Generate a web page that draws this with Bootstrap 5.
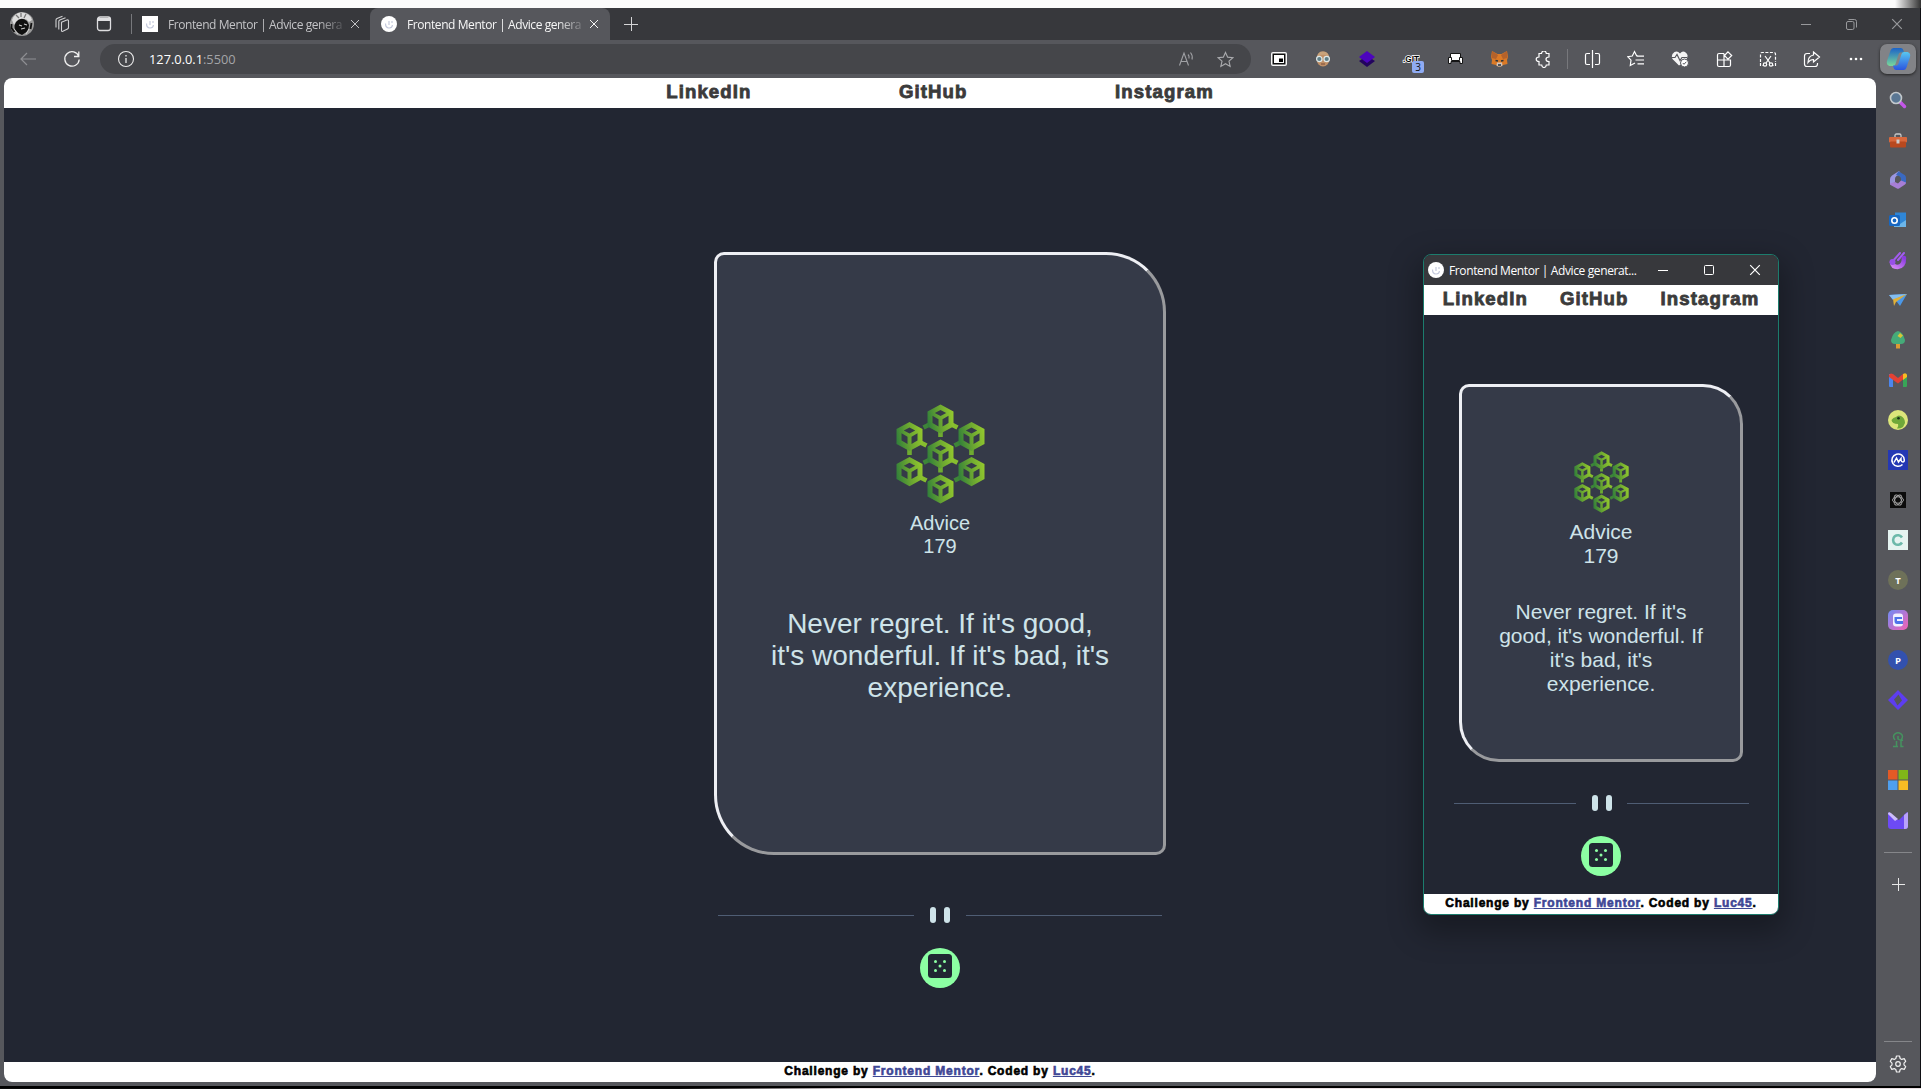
<!DOCTYPE html>
<html lang="en">
<head>
<meta charset="utf-8">
<title>Frontend Mentor | Advice generator app</title>
<link href="https://cdn.jsdelivr.net/npm/bootstrap@5.3.0/dist/css/bootstrap.min.css" rel="stylesheet">
<style>
body{width:1921px;height:1089px;overflow:hidden;background:#56575c;font-family:"Liberation Sans",Arial,sans-serif;line-height:normal}
svg{display:block;flex:none}
.ui-font{font-family:"Open Sans","Noto Sans",sans-serif}
.desk-top{height:8px;background:linear-gradient(90deg,transparent 1895px,#333 1921px),#fbfbfb}
.desk-bottom{height:3px;background:linear-gradient(#000 2px,transparent 2px),linear-gradient(90deg,#0a0a0a 680px,#e8dfe2 860px)}
.frame-edge{border-right:1px solid #0f1014}
.tab-strip{height:32px;background:#37383c}
.tab-item{height:32px;font-size:12px;color:#c3c3c6}
.tab-item.on{background:#56575c;border-radius:8px 8px 0 0;color:#f6f6f6}
.tab-title{width:174px;white-space:nowrap;letter-spacing:-.42px;-webkit-mask-image:linear-gradient(90deg,#000 150px,rgba(0,0,0,.15) 176px)}
.fav{width:16px;height:16px;background:#fff}
.vline{width:1px;height:20px;background:#77787c}
.tool-row{height:38px}
.address{width:1151px;height:30px;border-radius:15px;background:#45464a;font-size:12.8px;color:#a4a5a8}
.address b{font-weight:400;color:#fff}
.cell{width:44px;height:30px;display:flex;align-items:center;justify-content:center;flex:none}
.win-cell{width:45.5px;display:flex;justify-content:center}
.copilot{width:36px;height:30px;border-radius:7px;background:#828387;box-shadow:0 1px 3px #222}
.ext-count{left:23px;top:17px;width:12px;height:12px;border-radius:2px;background:#8fabf3;color:#111;font-size:10px;line-height:12px;text-align:center}
.page-view{width:1872px;height:1004px;border-radius:8px;overflow:hidden;background:#222632}
.top-links{height:30px;background:#fff;color:#3b3b3b;font-weight:700;font-size:18.6px;letter-spacing:1.1px;line-height:28px;-webkit-text-stroke:.85px #3b3b3b}
.wide-gap{gap:147.5px}.slim-gap{gap:32px}
.credits{height:20px;background:#fff;color:#000;font-size:12px;font-weight:700;letter-spacing:.8px;-webkit-text-stroke:.6px;line-height:18px}
.credits a{color:#3e4795;text-decoration:underline}
.advice-box{background:#353a48;border:3px solid;border-color:#eeeff4 #999a9d #999a9d #eeeff4;color:#cee3e9;text-align:center}
.box-lg{width:452px;height:603px;border-radius:10px 60px 10px 60px;margin-top:144px;padding-top:149px}
.box-sm{width:284px;height:378px;border-radius:10px 40px 10px 40px;margin-top:69px;padding-top:64px}
.num-lg{font-size:20px;line-height:23px;margin-top:8px}
.num-sm{font-size:21px;line-height:24px;margin-top:7px}
.say-lg{font-size:28px;line-height:32px;margin-top:50px;width:345px}
.say-sm{font-size:21px;line-height:24px;margin-top:32px;width:210px}
.dice-btn{width:40px;height:40px;border-radius:50%;background:#8cffa3}
.side-rail{width:44px}
.side-rail .slot{height:40px;display:flex;align-items:center;justify-content:center}
.side-rail .rule{width:28px;height:1px;background:#85868a}
.pop{left:1423px;top:254px;width:356px;height:661px;border:1px solid #1c7c6d;border-radius:8px;overflow:hidden;background:#222632}
.pop-shadow{left:1423px;top:254px;width:356px;height:661px;border-radius:8px;box-shadow:0 12px 30px 6px rgba(0,0,0,.3)}
.pop-bar{height:30px;background:#37383c;color:#fff;font-size:12px}
.pop-bar .ttl{width:192px;white-space:nowrap;letter-spacing:-.38px}
</style>
<script src="https://cdn.jsdelivr.net/npm/bootstrap@5.3.0/dist/js/bootstrap.bundle.min.js"></script>
</head>
<body>
<svg width="0" height="0" class="position-absolute">
<defs>
<linearGradient id="leaf" x1="0" y1=".6" x2="1" y2=".4"><stop offset="0" stop-color="#32803a"/><stop offset=".5" stop-color="#69a531"/><stop offset="1" stop-color="#93c82e"/></linearGradient>
<linearGradient id="cp1" x1="0" y1="0" x2="0" y2="1"><stop offset="0" stop-color="#1b62c8"/><stop offset="1" stop-color="#7ad99a"/></linearGradient>
<linearGradient id="cp2" x1="0" y1="0" x2="0" y2="1"><stop offset="0" stop-color="#58c7f0"/><stop offset="1" stop-color="#2b55e0"/></linearGradient>
<linearGradient id="pk" x1="0" y1="0" x2="1" y2="1"><stop offset="0" stop-color="#6f8df5"/><stop offset="1" stop-color="#f55fb3"/></linearGradient>
<linearGradient id="pur" x1="0" y1="1" x2="1" y2="0"><stop offset="0" stop-color="#d487f5"/><stop offset="1" stop-color="#8a3be0"/></linearGradient>
<symbol id="cube" viewBox="-14 -15 28 30" overflow="visible"><path fill="url(#leaf)" fill-rule="evenodd" d="M0-14.6 13-7.6V7.4L0 14.6-13 7.4V-7.6ZM0-9 5.7-6 0-3-5.7-6ZM-8-3.2-2 .2V7.4L-8 4ZM8-3.2 2 .2V7.4L8 4Z"/></symbol>
<symbol id="blocks" viewBox="-44.5 -50 89 100">
<g stroke-width="4.6" fill="none">
<path stroke="#6fab31" d="M0-22V-17M0 13v5.5M-31-5V1M31-5V1"/>
<path stroke="#86bd2f" d="M11-29.5 17-26.5M11 5.700 17 8.700M-20-11.500-14-8.500M-20 23.500-14 26.500"/>
<path stroke="#3e8538" d="M-11-29.500-17-26.500M-11 5.700-17 8.700M20-11.500 14-8.500M20 23.500 14 26.500"/>
</g>
<use href="#cube" x="-14" y="-50" width="28" height="30"/><use href="#cube" x="-14" y="-15" width="28" height="30"/><use href="#cube" x="-14" y="20" width="28" height="30"/>
<use href="#cube" x="-45" y="-32.500" width="28" height="30"/><use href="#cube" x="-45" y="2.700" width="28" height="30"/>
<use href="#cube" x="17" y="-32.500" width="28" height="30"/><use href="#cube" x="17" y="2.700" width="28" height="30"/>
</symbol>
<symbol id="dice" viewBox="0 0 24 24"><rect width="24" height="24" rx="3.500" fill="#202733"/><g fill="#8cffa3"><circle cx="7.500" cy="7.500" r="1.500"/><circle cx="16.500" cy="7.500" r="1.500"/><circle cx="12" cy="12" r="1.500"/><circle cx="7.500" cy="16.500" r="1.500"/><circle cx="16.500" cy="16.500" r="1.500"/></g></symbol>
<symbol id="spark" viewBox="0 0 16 16"><path d="M4.500 7.500c0 6 6.500 5.500 7 1.500M8 5v4M11 5v2" fill="none" stroke="#c5cadd" stroke-width="1.200"/></symbol>
<symbol id="cross" viewBox="0 0 10 10"><path d="M1 1 9 9M9 1 1 9" fill="none" stroke="currentColor"/></symbol>
</defs>
</svg>

<div class="desk-top"></div>
<div class="frame-edge">
  <!-- tab strip -->
  <div class="tab-strip d-flex align-items-center ui-font text-light">
    <svg style="margin-left:9px" width="26" height="26" viewBox="0 0 26 26"><circle cx="13" cy="13" r="12" fill="#999"/><path d="M3 9Q6 1 13 1.500 21 2 23 9L20 11Q17 7 13 8 8 8 5 14Z" fill="#dcdcdc"/><path d="M7 4l3 3M17 3l-2 4M12 2v4" stroke="#777" stroke-width="1.300"/><path d="M7 11q5-6 11-1l2 4-1 6-6 4-6-3q-3-5 0-10" fill="#101010"/><path d="M10 14l3 1M15 13l3 1M12 18l4-1M5 18l4 5M20 18l-3 5" stroke="#ccc" stroke-width="1.200" fill="none"/><path d="M2.500 13v4l3 4M22.500 12l-1 6" stroke="#111" stroke-width="1.800" fill="none"/></svg>
    <svg style="margin-left:18px" width="18" height="18" viewBox="0 0 18 18" fill="none" stroke="#d0d0d2" stroke-width="1.100"><path d="M8.500 7.200 13.800 5q1.700-.5 1.700 1v6.500q0 1-1 1.500L9.800 16.300Q8.500 16.800 8.500 15.500ZM5.800 14.500V6.500q0-1 1-1.500L12.500 2.800M3 12.500V5q0-1 1-1.500L9.500 1.300"/></svg>
    <svg style="margin-left:24px" width="18" height="18" viewBox="0 0 18 18" fill="none" stroke="#dedee0" stroke-width="1.300"><rect x="2.500" y="2" width="13" height="13.500" rx="2.500"/><path d="M3 4.500h12" stroke-width="3"/></svg>
    <div class="vline" style="margin-left:18px"></div>
    <div class="tab-item d-flex align-items-center" style="padding-left:10px;width:238px">
      <div class="fav"><svg width="16" height="16"><use href="#spark"/></svg></div><div class="tab-title" style="margin-left:10px">Frontend Mentor | Advice genera</div>
      <svg style="margin-left:8px" width="10" height="10"><use href="#cross"/></svg>
    </div>
    <div class="tab-item on d-flex align-items-center" style="padding-left:11px;width:240px">
      <div class="fav rounded-circle"><svg width="16" height="16"><use href="#spark"/></svg></div><div class="tab-title" style="margin-left:10px">Frontend Mentor | Advice genera</div>
      <svg style="margin-left:8px" width="10" height="10"><use href="#cross"/></svg>
    </div>
    <svg style="margin-left:14px" width="14" height="14" viewBox="0 0 14 14" stroke="#d5d5d7"><path d="M0 7.500h14M7.500 0v14"/></svg>
    <div class="d-flex align-items-center ms-auto" style="color:#98999c">
      <div class="win-cell"><svg width="10" height="10" stroke="currentColor"><path d="M0 5.500h10"/></svg></div>
      <div class="win-cell"><svg width="11" height="11" viewBox="0 0 11 11" stroke="currentColor" fill="none"><rect x=".5" y="2.500" width="7.500" height="8" rx="1.500"/><path d="M2.500.5h6q2 0 2 2v6"/></svg></div>
      <div class="win-cell"><svg width="12" height="12"><use href="#cross"/></svg></div>
    </div>
  </div>
  <!-- toolbar -->
  <div class="tool-row d-flex align-items-center ui-font">
    <svg style="margin-left:19px" width="18" height="14" viewBox="0 0 18 14" fill="none" stroke="#8e8f93" stroke-width="1.200"><path d="M17 7H2M8 1 2 7l6 6"/></svg>
    <svg style="margin-left:26px" width="18" height="18" viewBox="0 0 18 18" fill="none" stroke="#f0f0f0" stroke-width="1.300"><path d="M15.800 6.500A7.200 7.200 0 1 0 16.200 9.500M15.800 1.500V6.500H11"/></svg>
    <div class="address d-flex align-items-center" style="margin-left:19px">
      <svg style="margin-left:17px" width="18" height="18" viewBox="0 0 18 18" fill="none" stroke="#eaeaea" stroke-width="1.100"><circle cx="9" cy="9" r="7.500"/><path d="M9 8v5M9 5v1.500" stroke-width="1.300"/></svg>
      <div style="margin-left:14px;letter-spacing:0"><b>127.0.0.1</b>:5500</div>
      <svg class="ms-auto" width="18" height="16" viewBox="0 0 18 16" fill="none" stroke="#a0a1a5" stroke-width="1.100"><path d="M3.500 14.500 8 2l4.500 12.500M5 10.500h6M12 3.500q1.500 1.500 1 4M14.500 1.500q2.500 3 1.500 7"/></svg>
      <svg style="margin:0 17px 0 23px" width="17" height="17" viewBox="0 0 18 18" fill="none" stroke="#a9aaad" stroke-width="1.200"><path d="M9 1.500 11.300 6.500 16.800 7.100 12.700 10.800 13.900 16.300 9 13.500 4.100 16.300 5.300 10.800 1.200 7.100 6.700 6.500Z"/></svg>
    </div>
    <div class="d-flex align-items-center" style="margin-left:6px;color:#f3f3f3">
      <div class="cell"><svg width="16" height="14"><rect width="16" height="14" rx="2" fill="#f6f6f6"/><rect x="1.500" y="1.500" width="13" height="11" fill="#101010"/><rect x="3" y="3" width="10" height="8" fill="#fff"/><rect x="8" y="6.500" width="4" height="3.500" fill="#000"/></svg></div>
      <div class="cell"><svg width="16" height="16" viewBox="0 0 16 16"><ellipse cx="8" cy="8" rx="6.500" ry="7.500" fill="#c09067"/><path d="M2 6Q3 0 8 .5q5 0 6 5Q8 2 2 6" fill="#c9a37b"/><g fill="#5f7f88" stroke="#dfe8e8" stroke-width="1.200"><circle cx="4.300" cy="8" r="2.700"/><circle cx="11.700" cy="8" r="2.700"/></g><path d="M6 13h4" stroke="#784a36"/></svg></div>
      <div class="cell"><svg width="18" height="16" viewBox="0 0 18 16"><path d="M1 10 9 5l8 5-8 6Z" fill="#23045e"/><path d="M1 6 9 0l8 6-8 6Z" fill="#4c04bd"/></svg></div>
      <div class="cell position-relative"><svg width="18" height="14" viewBox="0 0 18 14"><text x="1" y="10" font-family="Liberation Sans" font-size="9" font-weight="700" fill="#000" stroke="#fff" stroke-width="1.600" paint-order="stroke" textLength="16" lengthAdjust="spacingAndGlyphs">.GIT</text></svg><span class="position-absolute ext-count">3</span></div>
      <div class="cell"><svg width="15" height="12" viewBox="0 0 15 12" fill="#fff" stroke="#151515"><path d="M2.500.5h10v8h-10Z"/><path d="M.5 4.500h3v3h8v-3h3V10.500h-2.500V8.500h-9v2H.5Z"/></svg></div>
      <div class="cell"><svg width="17" height="16" viewBox="0 0 17 16"><path d="M1 0 6.500 3h4L16 0l1 6-1 3 .500 4-4.500 1-2 1.500H7L5 14 .5 13 1 9 0 6Z" fill="#db7a26"/><path d="M1 0 7 4 5 8 .5 7ZM16 0 10 4l2 4 4.500-1Z" fill="#b4622b"/><path d="M6 11.500h5l.5 3-1.500 1H7L5.500 14.500Z" fill="#cfc3ba"/><path d="M4.500 9.500 7 10M12.500 9.500 10 10M7 14h3" stroke="#28323c" stroke-width="1.300"/></svg></div>
      <div class="cell"><svg width="17" height="17" viewBox="0 0 17 17" fill="none" stroke="#fff" stroke-width="1.200"><path d="M4 2.500H6.500Q7-.2 9-.1 11 0 11.300 2.500H14V6Q11 6 11 8.200 11 10.500 14 10.500V14H11.300Q11 16.500 9 16.500T6.700 14H4V10.500Q1.200 10.300 1.200 8.200T4 6Z"/></svg></div>
      <div class="vline" style="margin:0 2px"></div>
      <div class="cell"><svg width="17" height="18" viewBox="0 0 17 18" fill="none" stroke="#fff" stroke-width="1.200"><path d="M6 3.500H3Q1.500 3.500 1.500 5v8q0 1.500 1.500 1.500h3M8.500 0v18M11 3.500H14q1.500 0 1.500 1.500v8q0 1.500-1.500 1.500h-3"/></svg></div>
      <div class="cell"><svg width="18" height="18" viewBox="0 0 18 18" fill="none" stroke="#fff" stroke-width="1.200"><path d="M11 6 9.500 5.500 7.500 1.500 5.300 6 .8 6.700 4 10.200 3.300 15.500 8 13M9.500 6.200H17M8.500 10H17M10.500 13.800H17"/></svg></div>
      <div class="cell"><svg width="18" height="18" viewBox="0 0 18 18"><path d="M9 3.500Q6.500.5 3.500 2-.5 4.500 1.500 9L8 15.500 12 13q5-4 4.500-8Q15 1.500 12 1.500 10 1.800 9 3.500" fill="#f4f4f4"/><path d="M0 7.500h4l2-3 3 6 2-3h5" fill="none" stroke="#56575c" stroke-width="1.200"/><circle cx="13.500" cy="13" r="4" fill="#fff" stroke="#56575c"/><path d="m11.800 13 1.200 1.300 2.300-2.500" stroke="#56575c" fill="none"/></svg></div>
      <div class="cell"><svg width="17" height="17" viewBox="0 0 17 17" fill="none" stroke="#fff" stroke-width="1.200"><path d="M8 2.500H3Q1.500 2.500 1.500 4v10q0 1.500 1.500 1.500H13q1.500 0 1.500-1.500V9H1.500M8 2.500v13M12 .8 15.700 4.500 12 8.200 8.400 4.500Z"/></svg></div>
      <div class="cell"><svg width="18" height="17" viewBox="0 0 18 17" fill="none" stroke="#fff" stroke-width="1.200"><path d="M1.500 11V3q0-1.500 1.500-1.500h12q1.500 0 1.500 1.500v8M1.500 12v2.500h3M16.500 12v2.500h-3" stroke-dasharray="3 1.500"/><path d="M6 5l5 7M12 5 7 12"/><circle cx="6" cy="13.500" r="1.700"/><circle cx="12" cy="13.500" r="1.700"/></svg></div>
      <div class="cell"><svg width="18" height="17" viewBox="0 0 18 17" fill="none" stroke="#fff" stroke-width="1.200"><path d="M7 2.500H4Q1.500 2.500 1.500 5v8q0 2.500 2.500 2.500h8q2.500 0 2.500-2.500v-1M10.500 1 16.500 6l-6 5V8.500Q7 8.500 5 11.500 5 5 10.500 4Z"/></svg></div>
      <div class="cell"><svg width="14" height="4" fill="#fff"><circle cx="2" cy="2" r="1.300"/><circle cx="7" cy="2" r="1.300"/><circle cx="12" cy="2" r="1.300"/></svg></div>
    </div>
    <div class="copilot d-flex align-items-center justify-content-center" style="margin-left:2px"><svg width="25" height="24" viewBox="0 0 25 24"><path d="M7.500 1H15q2 .2 2.500 2.500L18 5.500h-3.500q-1.500 0-2 2L9.500 17q-.7 2-2.500 2H3.500Q0 18 1 14L4.500 3.500Q5.300 1 7.500 1" fill="url(#cp1)"/><path d="M17.500 23H10q-2-.2-2.500-2.500L7 18.500h3.500q1.500 0 2-2L15.500 7q.7-2 2.500-2h3.500Q25 6 24 10l-3.500 10.500Q19.700 23 17.500 23" fill="url(#cp2)"/></svg></div>
  </div>
  <div class="d-flex" style="height:1008px">
    <!-- web page -->
    <div class="page-view d-flex flex-column" style="margin-left:4px">
      <nav class="top-links wide-gap d-flex justify-content-center"><span>LinkedIn</span><span>GitHub</span><span>Instagram</span></nav>
      <main class="flex-fill d-flex flex-column align-items-center">
        <div class="advice-box box-lg d-flex flex-column align-items-center">
          <svg width="89" height="100"><use href="#blocks"/></svg>
          <div class="num-lg">Advice<br>179</div>
          <div class="say-lg">Never regret. If it's good, it's wonderful. If it's bad, it's experience.</div>
        </div>
        <svg style="margin-top:52px" width="444" height="16"><path fill="#4f5d74" d="M0 8h196v1H0zM248 8h196v1H248z"/><g fill="#cee3e9"><rect x="212" width="6" height="16" rx="3"/><rect x="226" width="6" height="16" rx="3"/></g></svg>
        <div class="dice-btn d-flex justify-content-center" style="margin-top:25px;padding-top:6px"><svg width="24" height="24"><use href="#dice"/></svg></div>
      </main>
      <footer class="credits text-center">Challenge by <a href="#">Frontend Mentor</a>. Coded by <a href="#">Luc45</a>.</footer>
    </div>
    <!-- sidebar -->
    <aside class="side-rail d-flex flex-column align-items-stretch">
      <div style="height:2px"></div>
      <div class="slot"><svg width="18" height="18" viewBox="0 0 18 18"><path d="m11 11 4.500 4.500" stroke="#c356e8" stroke-width="3.500" stroke-linecap="round"/><circle cx="7" cy="7" r="5.500" fill="#5a7794" stroke="#c2c8cc" stroke-width="1.600"/></svg></div>
      <div class="slot"><svg width="18" height="15" viewBox="0 0 18 15"><path d="M6 4V2.500Q6 1 7.500 1h3Q12 1 12 2.500V4" fill="none" stroke="#c9c9c9" stroke-width="1.300"/><rect x="0" y="4" width="18" height="5.500" rx="1" fill="#d9683c"/><rect x="1" y="8.500" width="16" height="6" rx="1" fill="#b8491f"/><rect x="7.500" y="6.500" width="3" height="4" fill="#ccc"/></svg></div>
      <div class="slot"><svg width="18" height="18" viewBox="0 0 18 18"><path d="M10 0 3 4.500Q1 6 1 8v4.500q0 1 1 1.500l4-3V8q0-2 1.500-3L12 3Z" fill="#9b96e0"/><path d="m9.500.3 6.500 4q1 1 1 3v5.200l-5-2V8Q12 6 10 5L7 4Z" fill="#3a69c0"/><path d="M1 12.500Q1 13.500 2 14.200l6 3.300q1 .500 2 0l6-4q1-.7 1-2l-5-2-3 3-3-1.500Z" fill="#a77ed6"/></svg></div>
      <div class="slot"><svg width="18" height="18" viewBox="0 0 18 18"><path d="M6 1.500h11V15H6Z" fill="#2f86d6"/><path d="m5 10 6 3 6-4v7H5Z" fill="#6cb6ea"/><rect y="4" width="11" height="11" rx="1.500" fill="#1767c2"/><circle cx="5.500" cy="9.500" r="2.700" fill="none" stroke="#fff" stroke-width="1.600"/></svg></div>
      <div class="slot"><svg width="18" height="19" viewBox="0 0 18 19"><path d="M3 11Q3.500 16 8.500 16 15 15.500 15 7" fill="none" stroke="url(#pur)" stroke-width="4.500" stroke-linecap="round"/><path d="M3 11 11 2M9 9l6-7" stroke="#a25cf0" stroke-width="2" stroke-linecap="round"/><circle cx="3.500" cy="11" r="3" fill="#9850e8"/></svg></div>
      <div class="slot"><svg width="18" height="13" viewBox="0 0 18 13"><path d="M0 1 18 0 11 12 8 8Z" fill="#4b98e8"/><path d="m0 1 4 5L18 0Z" fill="#83bdf0"/><path d="m4 5 1 7 2-4L18 0 5 5Z" fill="#e0b038"/></svg></div>
      <div class="slot"><svg width="14" height="18" viewBox="0 0 14 18"><path d="M5 11h4v6.500H5Z" fill="#dc9b33"/><path d="M7 0Q12 1 14 9q0 4-4 4H4q-4 0-4-4Q2 1 7 0" fill="#45ab79"/><path d="M9 2 12 4.500 9.500 7 6.500 5Z" fill="#d7c638"/></svg></div>
      <div class="slot"><svg width="18" height="14" viewBox="0 0 18 14"><path d="M0 1h4v13H1q-1 0-1-1Z" fill="#4c86ed"/><path d="M14 1h4v12q0 1-1 1h-3Z" fill="#38a557"/><path d="M0 2Q1-.5 4 1l5 4 5-4v5.500L9 10.500 0 4Z" fill="#e34133"/><path d="M14 1q3-2 4 1v2l-4 3Z" fill="#f8ba22"/></svg></div>
      <div class="slot"><svg width="20" height="20" viewBox="0 0 20 20"><circle cx="10" cy="10" r="10" fill="#dce67a"/><path d="M3.500 10Q5 7.500 8 7q2-2.500 5-1 4 2 4 7l-2 4q-3 2-6 1.500 2-2 1-4.500-6 0-6.500-4" fill="#6fa83a"/><circle cx="10.500" cy="8.300" r="1.300" fill="#183018"/></svg></div>
      <div class="slot"><svg width="20" height="20" viewBox="0 0 20 20"><rect width="20" height="20" fill="#2438b4"/><path d="M14.500 14.500a6.200 6.200 0 1 1 1.800-4.500q0 2-1.500 2T13 10V8.500L10.500 12 8.500 8 6 12.500" fill="none" stroke="#fff" stroke-width="1.500"/></svg></div>
      <div class="slot"><svg width="16" height="16" viewBox="0 0 16 16"><rect width="16" height="16" fill="#0b0b0b"/><g fill="none" stroke="#a8a8a8" stroke-width=".9"><ellipse cx="8" cy="8" rx="5.500" ry="3.200"/><ellipse cx="8" cy="8" rx="5.500" ry="3.200" transform="rotate(60 8 8)"/><ellipse cx="8" cy="8" rx="5.500" ry="3.200" transform="rotate(120 8 8)"/></g></svg></div>
      <div class="slot"><svg width="20" height="20" viewBox="0 0 20 20"><rect width="20" height="20" fill="#e6f4f1"/><path d="M14 7.500a4.800 4.800 0 1 0 0 5" fill="none" stroke="#6db9aa" stroke-width="2.600"/></svg></div>
      <div class="slot"><svg width="20" height="20"><circle cx="10" cy="10" r="10" fill="#6e7159"/><text x="10" y="13.500" text-anchor="middle" fill="#fff" font-size="9.500" font-weight="700" font-family="Open Sans">T</text></svg></div>
      <div class="slot"><svg width="20" height="20" viewBox="0 0 20 20"><rect width="20" height="20" rx="5" fill="url(#pk)"/><rect x="5" y="3.500" width="10" height="13" rx="3" fill="#f0f0ff"/><path d="M6.500 7H14v2h-5v2h6v3H9q-2.500 0-2.500-3Z" fill="#4e74ea"/></svg></div>
      <div class="slot"><svg width="20" height="20"><circle cx="10" cy="10" r="10" fill="#3351ae"/><text x="10" y="13.500" text-anchor="middle" fill="#fff" font-size="9.500" font-weight="700" font-family="Open Sans">P</text></svg></div>
      <div class="slot"><svg width="20" height="20" viewBox="0 0 20 20"><path fill-rule="evenodd" d="m10 0 10 10-10 10L0 10ZM10.500 4.500 6 9.500 9.500 15.500 14 10.500Z" fill="#5d3df0"/></svg></div>
      <div class="slot"><svg width="12" height="16" viewBox="0 0 12 16" fill="none" stroke="#45935f" stroke-width="1.500"><path d="M3 8Q0 4 3 1.800q3-2 6 0Q12 4 9 8v6.500h2.500M3 14.500h3M4.500 14V9M1 14.500h2M6 4v3q3 2 5 1"/></svg></div>
      <div class="slot"><svg width="20" height="20"><path d="M0 0h9.500v9.500H0Z" fill="#e35a26"/><path d="M10.500 0H20v9.500h-9.500Z" fill="#80b718"/><path d="M0 10.500h9.500V20H0Z" fill="#4f9fee"/><path d="M10.500 10.500H20V20h-9.500Z" fill="#f7bb24"/></svg></div>
      <div class="slot"><svg width="20" height="17" viewBox="0 0 20 17"><path d="M0 2 1 0l7 7 3 1 8-8 1 2v12q0 3-3 3H3q-3 0-3-3Z" fill="#6d4af5"/><path d="M16 3l4-3v14q0 3-3 3h-1Z" fill="#b9a2fb"/><path d="M0 2Q0-1 3 1l7 6-3 2Z" fill="#cdbdfc"/></svg></div>
      <div class="slot" style="height:24px"><div class="rule"></div></div>
      <div class="slot"><svg width="13" height="13" stroke="#e8e8e8"><path d="M0 6.500h13M6.500 0v13"/></svg></div>
      <div class="mt-auto d-flex justify-content-center"><div class="rule"></div></div>
      <div class="slot" style="height:44px"><svg width="18" height="18" viewBox="0 0 18 18" fill="none" stroke="#f0f0f0" stroke-width="1.200"><circle cx="9" cy="9" r="2.300"/><path d="M7.500 1h3l.7 2.500 1.500.9 2.500-.8 1.500 2.700L15 8.100v1.800l1.700 1.800-1.500 2.700-2.500-.8-1.500.9-.7 2.500h-3l-.7-2.500-1.500-.9-2.500.8-1.500-2.700L3 9.900V8.100L1.300 6.300l1.500-2.700 2.500.8 1.500-.9Z" stroke-linejoin="round"/></svg></div>
    </aside>
  </div>
</div>
<div class="desk-bottom"></div>

<!-- floating app window -->
<div class="position-absolute pop-shadow"></div>
<div class="position-absolute pop d-flex flex-column">
  <div class="pop-bar ui-font d-flex align-items-center">
    <div class="fav rounded-circle" style="margin-left:4px"><svg width="16" height="16"><use href="#spark"/></svg></div>
    <div class="ttl" style="margin-left:5px">Frontend Mentor | Advice generat...</div>
    <svg style="margin-left:17px" width="10" height="10" stroke="#fff"><path d="M0 5.500h10"/></svg>
    <svg style="margin-left:36px" width="10" height="10" fill="none" stroke="#fff"><rect x=".5" y=".5" width="9" height="9" rx="1"/></svg>
    <svg style="margin-left:35px" width="12" height="12"><use href="#cross"/></svg>
  </div>
  <nav class="top-links slim-gap d-flex justify-content-center"><span>LinkedIn</span><span>GitHub</span><span>Instagram</span></nav>
  <main class="flex-fill d-flex flex-column align-items-center">
    <div class="advice-box box-sm d-flex flex-column align-items-center">
      <svg width="55" height="62"><use href="#blocks"/></svg>
      <div class="num-sm">Advice<br>179</div>
      <div class="say-sm">Never regret. If it's good, it's wonderful. If it's bad, it's experience.</div>
    </div>
    <svg style="margin-top:33px" width="295" height="16"><path fill="#4f5d74" d="M0 8h122v1H0zM173 8h122v1H173z"/><g fill="#cee3e9"><rect x="138" width="6" height="16" rx="3"/><rect x="152" width="6" height="16" rx="3"/></g></svg>
    <div class="dice-btn d-flex justify-content-center" style="margin-top:25px;padding-top:7px"><svg width="24" height="24"><use href="#dice"/></svg></div>
  </main>
  <footer class="credits text-center">Challenge by <a href="#">Frontend Mentor</a>. Coded by <a href="#">Luc45</a>.</footer>
</div>
</body>
</html>
